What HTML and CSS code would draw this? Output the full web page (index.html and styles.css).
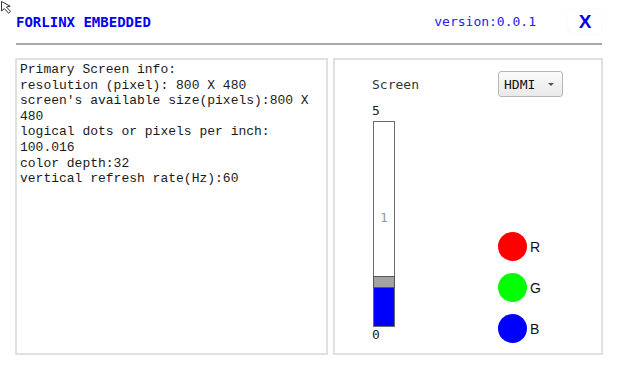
FILE: index.html
```html
<!DOCTYPE html>
<html lang="en">
<head>
  <meta charset="UTF-8">
  <title>Forlinx Embedded - Screen</title>
  <link rel="stylesheet" href="styles.css">
</head>
<body>

<svg class="cursor" width="16" height="16" viewBox="0 0 16 16">
  <path d="M1.5 1.5 L1.5 11 L4.3 8.6 L8.6 13.2 L10.6 11.4 L6.4 7 L10.2 6.2 Z" fill="#fff" stroke="#333" stroke-width="1" stroke-linejoin="round"/>
</svg>

<div class="page">
  <div class="header">
    <span class="title">FORLINX EMBEDDED</span>
    <span class="version">version:0.0.1</span>
    <button class="close">X</button>
  </div>

  <div class="panels">
    <div class="panel info">
      <div>Primary Screen info:</div>
      <div>resolution (pixel): 800 X 480</div>
      <div>screen's available size(pixels):800 X 480</div>
      <div>logical dots or pixels per inch: 100.016</div>
      <div>color depth:32</div>
      <div>vertical refresh rate(Hz):60</div>
    </div>

    <div class="panel screen">
      <span class="label">Screen</span>
      <div class="select">HDMI <span class="arrow"></span></div>

      <div class="slider">
        <span class="tick">5</span>
        <div class="track">
          <div class="track-top"><span class="value">1</span></div>
          <div class="handle"></div>
          <div class="fill"></div>
        </div>
        <span class="tick">0</span>
      </div>

      <div class="rgb">
        <div class="led"><span class="dot red"></span>R</div>
        <div class="led"><span class="dot green"></span>G</div>
        <div class="led"><span class="dot blue"></span>B</div>
      </div>
    </div>
  </div>
</div>

</body>
</html>
```

FILE: styles.css
```css
body {
  margin: 0;
  background: #fff;
  font-family: "DejaVu Sans Mono", monospace;
  font-size: 13px;
  color: #222;
}

.cursor {
  position: absolute;
  left: 0;
  top: 0;
}

.page {
  padding: 0 16px 0 15px;
}

.header {
  display: flex;
  align-items: center;
  height: 43px;
  margin: 0 1px;
  border-bottom: 2px solid #a8a8a8;
}

.title {
  font-size: 14px;
  font-weight: bold;
  color: #0000f0;
}

.version {
  margin-left: auto;
  margin-right: 32px;
  color: #2020f0;
}

.close {
  width: 34px;
  height: 25px;
  padding: 0;
  border: none;
  border-radius: 6px;
  background: #fff;
  box-shadow: 0 0 2px rgba(0, 0, 0, 0.07);
  font-family: "Liberation Sans", sans-serif;
  font-size: 19px;
  font-weight: bold;
  color: #0000e6;
}

.panels {
  display: flex;
  gap: 5px;
  margin-top: 13px;
}

.panel {
  height: 297px;
  box-sizing: border-box;
  border: 2px solid #e0e0e0;
  background: #fff;
}

.info {
  width: 313px;
  padding: 2px 3px;
  font-family: "Liberation Mono", monospace;
  line-height: 15.6px;
  color: #1a1a1a;
}

.screen {
  flex: 1;
  display: grid;
  grid-template-columns: 126px auto;
  grid-template-rows: 26px auto;
  align-content: start;
  padding: 11px 0 0 37px;
}

.label {
  align-self: center;
  color: #333;
}

.select {
  width: 65px;
  box-sizing: border-box;
  display: flex;
  align-items: center;
  justify-content: space-between;
  padding: 0 8px 0 5px;
  border: 1px solid #b8b8b8;
  border-radius: 3px;
  background: linear-gradient(#fafafa, #e9e9e9);
  color: #111;
}

.arrow {
  width: 0;
  height: 0;
  border-left: 3px solid transparent;
  border-right: 3px solid transparent;
  border-top: 3px solid #555;
}

.slider {
  display: flex;
  flex-direction: column;
  align-items: flex-start;
  margin-top: 6px;
}

.tick {
  line-height: 15px;
  color: #222;
}

.track {
  display: flex;
  flex-direction: column;
  width: 22px;
  height: 206px;
  box-sizing: border-box;
  margin: 3px 0 0 1px;
  border: 1px solid #6a6a6a;
}

.track-top {
  flex: 1;
  text-align: center;
  padding-top: 88px;
}

.value {
  color: #999;
}

.handle {
  height: 12px;
  margin: 0 -1px;
  box-sizing: border-box;
  border: 1px solid #555;
  background: #a3a3a3;
}

.fill {
  height: 38px;
  background: #0000ff;
}

.rgb {
  align-self: end;
  display: flex;
  flex-direction: column;
  gap: 12px;
  margin-bottom: -1px;
}

.led {
  display: flex;
  align-items: center;
  gap: 3px;
  font-family: "Liberation Sans", sans-serif;
  font-size: 14px;
  color: #111;
}

.dot {
  width: 29px;
  height: 29px;
  border-radius: 50%;
}

.red { background: #ff0000; }
.green { background: #00ff00; }
.blue { background: #0000ff; }
```
